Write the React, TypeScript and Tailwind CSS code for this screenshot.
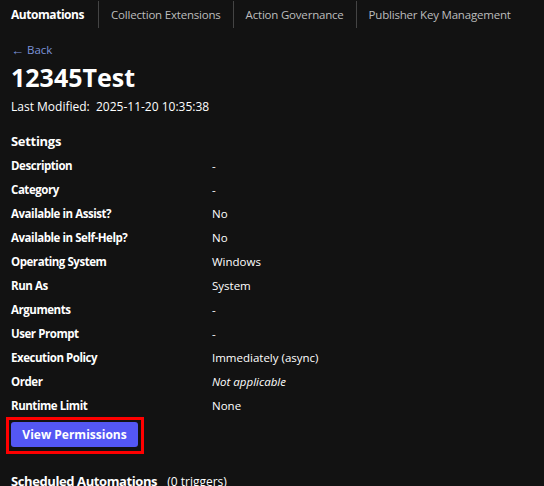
const tabs = ['Automations', 'Collection Extensions', 'Action Governance', 'Publisher Key Management'];

const settings: { label: string; value: string; italic?: boolean }[] = [
	{ label: 'Description', value: '-' },
	{ label: 'Category', value: '-' },
	{ label: 'Available in Assist?', value: 'No' },
	{ label: 'Available in Self-Help?', value: 'No' },
	{ label: 'Operating System', value: 'Windows' },
	{ label: 'Run As', value: 'System' },
	{ label: 'Arguments', value: '-' },
	{ label: 'User Prompt', value: '-' },
	{ label: 'Execution Policy', value: 'Immediately (async)' },
	{ label: 'Order', value: 'Not applicable', italic: true },
	{ label: 'Runtime Limit', value: 'None' }
];

export default function App() {
	return (
		<div className="min-h-[486px] bg-[#121212] text-white font-['Open_Sans',sans-serif] overflow-hidden">
			<nav className="flex h-[28px] pt-[1px]">
				{tabs.map((tab, i) => (
					<div
						key={tab}
						className={
							i === 0
								? 'flex shrink-0 items-center whitespace-nowrap pl-[11px] pr-[14px] text-[12px] font-bold tracking-[-0.45px] text-white'
								: 'flex shrink-0 items-center whitespace-nowrap border-l border-[#444] pl-[12px] pr-[12px] text-[11.5px] tracking-[-0.2px] text-[#bdbdbd]'
						}
					>
						{tab}
					</div>
				))}
			</nav>

			<div className="px-[11px]">
				<a className="mt-[14px] flex h-[16px] items-center gap-[3px] text-[11.5px] text-[#7b93d8]">
					<span className="text-[13px] leading-none">←</span>
					<span>Back</span>
				</a>
				<h1 className="mt-[2px] text-[25px] font-bold leading-[34px]">12345Test</h1>
				<div className="mt-[5px] text-[12px] leading-[16px]">
					Last Modified:&nbsp; 2025-11-20 10:35:38
				</div>

				<h2 className="mt-[17px] text-[13px] font-bold leading-[18px] tracking-[-0.3px]">Settings</h2>
				<div className="mt-[4px] flex flex-col">
					{settings.map((row) => (
						<div key={row.label} className="flex h-[24px] items-center text-[11.5px]">
							<div className="w-[201px] font-bold tracking-[-0.45px]">{row.label}</div>
							<div className={row.italic ? 'italic' : ''}>{row.value}</div>
						</div>
					))}
				</div>

				<div className="ml-[-5px] mt-[-1px] inline-block border-[3px] border-[#ff0000] pb-[4px] pl-[2px] pr-[3px] pt-[2px]">
					<button className="block h-[25px] w-[127px] rounded-[3px] bg-[#5457f4] text-[12px] font-bold text-white">
						View Permissions
					</button>
				</div>

				<div className="mt-[18px] flex items-baseline gap-[10px]">
					<span className="text-[13px] font-bold leading-[18px] tracking-[-0.4px]">Scheduled Automations</span>
					<span className="text-[12px]">(0 triggers)</span>
				</div>
			</div>
		</div>
	);
}
